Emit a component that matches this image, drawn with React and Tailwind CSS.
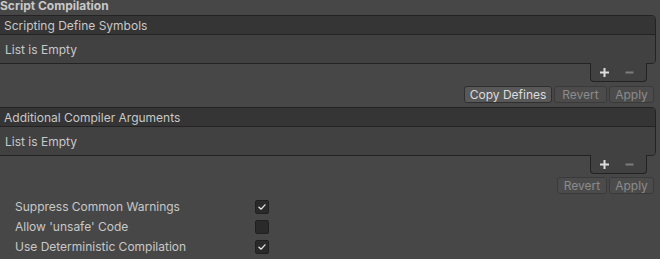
import React from "react";

const font = { fontFamily: "Inter, 'Liberation Sans', sans-serif" };

const Check = () => (
  <svg viewBox="0 0 14 14" className="w-[14px] h-[14px]" fill="none">
    <path d="M3.5 7.2L6 9.5L10.5 4.5" stroke="#e4e4e4" strokeWidth="1.6" strokeLinecap="round" strokeLinejoin="round" />
  </svg>
);

const Plus = () => (
  <svg viewBox="0 0 11 11" className="w-[11px] h-[11px]">
    <path d="M1 5.5H10M5.5 1V10" stroke="#dcdcdc" strokeWidth="2" />
  </svg>
);

const Minus = () => (
  <svg viewBox="0 0 11 11" className="w-[11px] h-[11px]">
    <path d="M1.5 5.5H9.5" stroke="#7c7c7c" strokeWidth="2" />
  </svg>
);

const ListBox = ({ title }) => (
  <div>
    <div className="ml-[-1px] w-[657px] border border-[#232323] rounded-tr-[4px] rounded-br-[4px] overflow-hidden">
      <div className="h-[19px] bg-[#353535] border-b border-[#232323] flex items-center pl-[4px] pt-[1px] text-[12px] text-[#c8c8c8]">
        {title}
      </div>
      <div className="h-[28px] bg-[#414141] flex items-center pl-[5px] pt-[1px] text-[12px] text-[#c8c8c8]">
        List is Empty
      </div>
    </div>
    <div className="flex justify-end pr-[13px]">
      <div className="w-[57px] h-[19px] mt-[-1px] bg-[#414141] border border-t-0 border-[#232323] rounded-b-[4px] flex items-center pl-[8px] gap-[14px]">
        <Plus />
        <Minus />
      </div>
    </div>
  </div>
);

const Btn = ({ children, on, w }) => (
  <div
    className={`h-[17px] rounded-[3px] border flex items-center justify-center text-[12px] ${w} ${
      on ? "bg-[#585858] border-[#2f2f2f] text-[#dcdcdc]" : "bg-[#4b4b4b] border-[#3a3a3a] text-[#8c8c8c]"
    }`}
  >
    {children}
  </div>
);

const Row = ({ label, checked }) => (
  <div className="h-[20px] flex items-center">
    <div className="w-[255px] pl-[15px] text-[12px] text-[#c8c8c8]">{label}</div>
    <div className="w-[14px] h-[14px] rounded-[2px] bg-[#2a2a2a] border border-[#202020] flex items-center justify-center">
      {checked && <Check />}
    </div>
  </div>
);

export default function App() {
  return (
    <div className="w-[660px] h-[259px] bg-[#474747] overflow-hidden" style={font}>
      <div className="h-[15px] mt-[-2px] text-[12px] font-bold text-[#c8c8c8] leading-[15px]">
        Script Compilation
      </div>
      <div className="mt-[2px]">
        <ListBox title="Scripting Define Symbols" />
      </div>
      <div className="flex justify-end gap-[2px] pr-[6px] mt-[4px]">
        <Btn on w="w-[88px]">Copy Defines</Btn>
        <Btn w="w-[53px]">Revert</Btn>
        <Btn w="w-[45px]">Apply</Btn>
      </div>
      <div className="mt-[4px]">
        <ListBox title="Additional Compiler Arguments" />
      </div>
      <div className="flex justify-end gap-[2px] pr-[6px] mt-[3px]">
        <Btn w="w-[50px]">Revert</Btn>
        <Btn w="w-[45px]">Apply</Btn>
      </div>
      <div className="mt-[3px]">
        <Row label="Suppress Common Warnings" checked />
        <Row label="Allow 'unsafe' Code" />
        <Row label="Use Deterministic Compilation" checked />
      </div>
    </div>
  );
}
